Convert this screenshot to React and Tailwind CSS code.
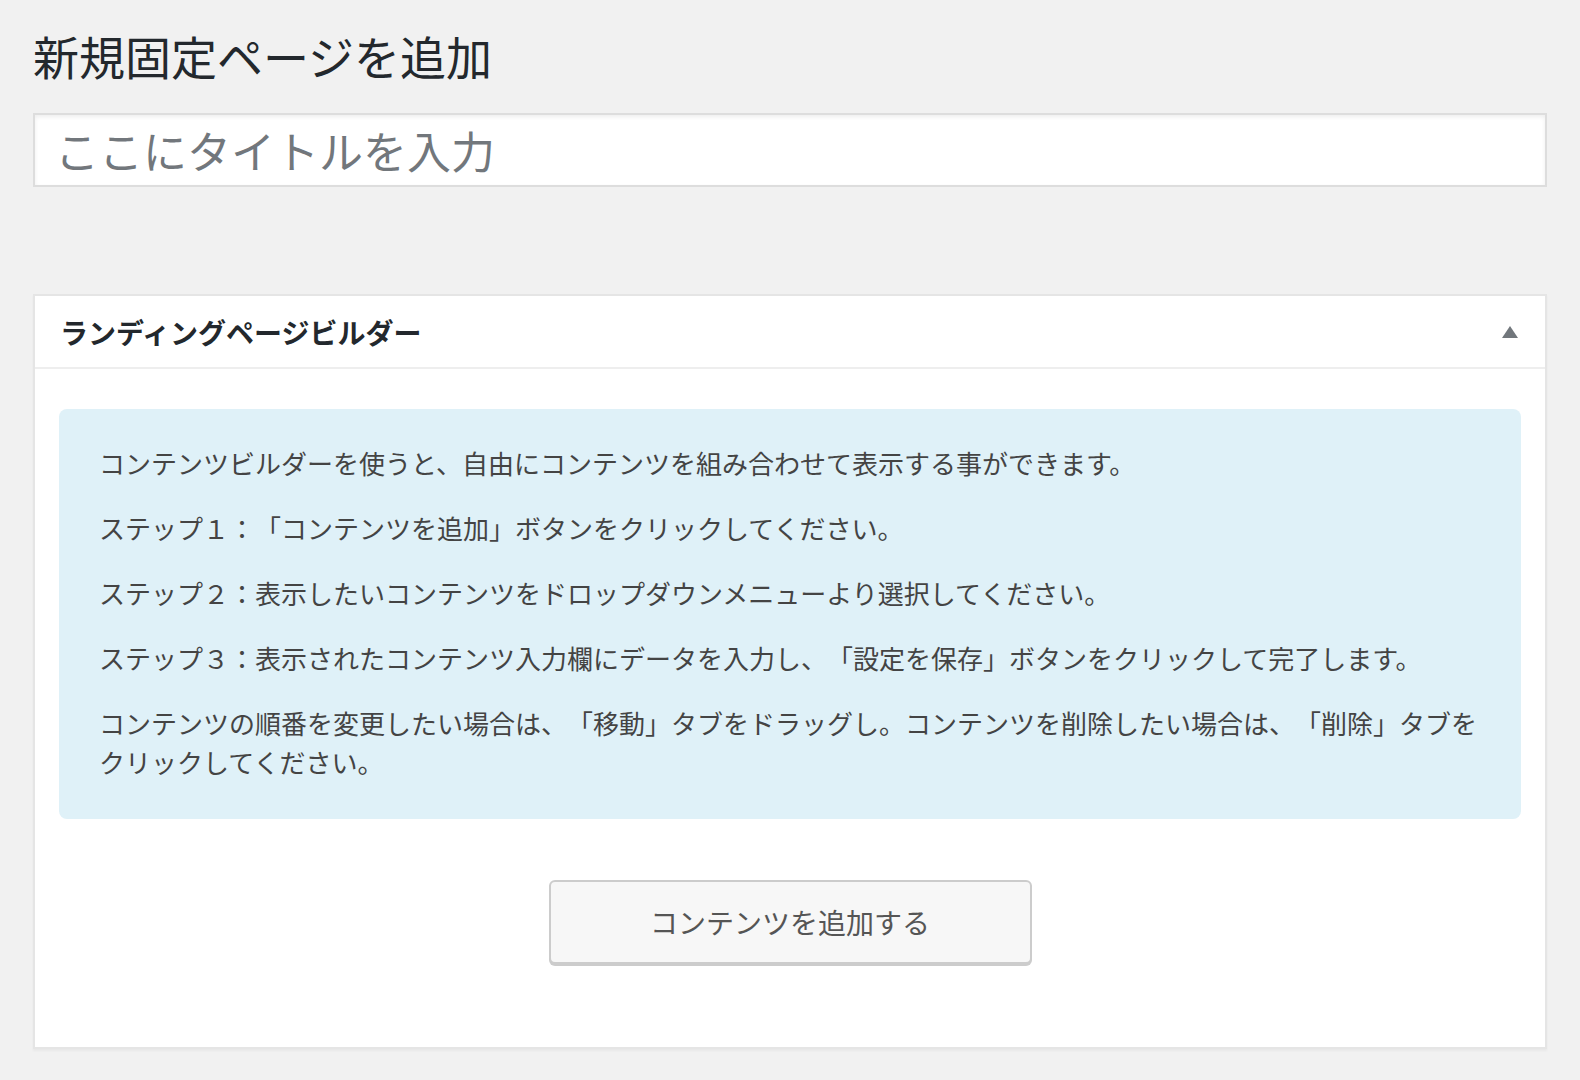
import { useState } from "react";

const paragraphs = [
  "コンテンツビルダーを使うと、自由にコンテンツを組み合わせて表示する事ができます。",
  "ステップ１：「コンテンツを追加」ボタンをクリックしてください。",
  "ステップ２：表示したいコンテンツをドロップダウンメニューより選択してください。",
  "ステップ３：表示されたコンテンツ入力欄にデータを入力し、「設定を保存」ボタンをクリックして完了します。",
  "コンテンツの順番を変更したい場合は、「移動」タブをドラッグし。コンテンツを削除したい場合は、「削除」タブをクリックしてください。",
];

function App() {
  const [title, setTitle] = useState("");
  const [open, setOpen] = useState(true);

  return (
    <div className="min-h-screen bg-[#f1f1f1] px-[33px] pt-[25px] font-['Noto_Sans_CJK_JP','Noto_Sans',sans-serif] [text-spacing-trim:space-all]">

      {/* page heading */}
      <h1 className="text-[46px] leading-[60px] font-normal text-[#23282d]">
        新規固定ページを追加
      </h1>

      {/* title field */}
      <input
        type="text"
        value={title}
        onChange={(e) => setTitle(e.target.value)}
        placeholder="ここにタイトルを入力"
        className="mt-[28px] block w-full h-[74px] border-2 border-[#ddd] bg-white pl-[20px] text-[44px] text-[#32373c] placeholder:text-[#72777c] shadow-[inset_0_2px_4px_rgba(0,0,0,0.07)] outline-none"
      />

      {/* landing page builder metabox */}
      <div className="mt-[107px] border-2 border-[#e5e5e5] bg-white shadow-[0_2px_2px_rgba(0,0,0,0.04)]">

        <div className="h-[73px] flex items-center justify-between pl-[25px] pr-[27px] border-b-2 border-[#eee]">
          <h2 className="text-[28px] font-bold text-[#23282d]">
            ランディングページビルダー
          </h2>
          <button onClick={() => setOpen(!open)} className="flex items-center">
            <svg width="16" height="12" viewBox="0 0 16 12">
              <path d="M8 0 L16 12 L0 12 Z" fill="#72777c" />
            </svg>
          </button>
        </div>

        {open && (
          <div className="px-[24px] pt-[40px] pb-[83px]">

            <div className="rounded-[8px] bg-[#dff1f8] px-[40px] pt-[34px] pb-[38px] text-[26px] leading-[39px] text-[#444] flex flex-col gap-[26px]">
              {paragraphs.map((p) => (
                <p key={p}>{p}</p>
              ))}
            </div>

            <div className="flex justify-center mt-[61px]">
              <button className="w-[483px] h-[84px] border-2 border-[#ccc] rounded-[6px] bg-[#f7f7f7] shadow-[0_2px_0_#ccc] text-[28px] text-[#555]">
                コンテンツを追加する
              </button>
            </div>

          </div>
        )}

      </div>

    </div>
  );
}

export default App;
